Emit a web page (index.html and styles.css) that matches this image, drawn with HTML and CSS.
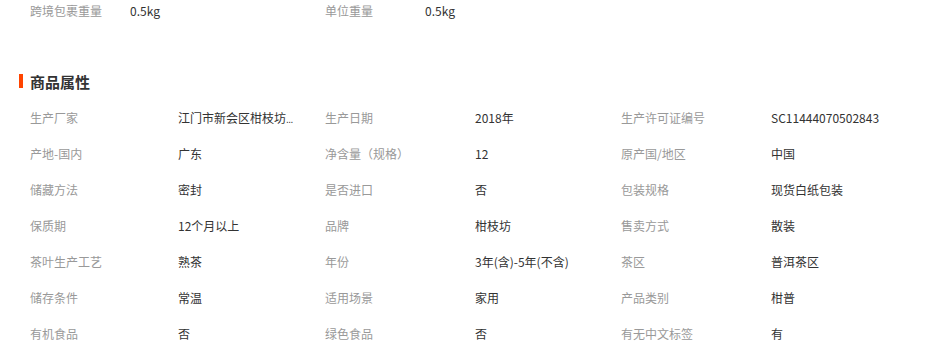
FILE: index.html
```html
<!DOCTYPE html>
<html lang="zh-CN">
<head>
<meta charset="utf-8">
<title>商品属性</title>
<link rel="stylesheet" href="styles.css">
</head>
<body>
<div class="page">
  <div class="top-row">
    <div class="top-item"><span class="top-label">跨境包裹重量</span><span class="value">0.5kg</span></div>
    <div class="top-item"><span class="top-label">单位重量</span><span class="value">0.5kg</span></div>
  </div>

  <h2 class="section-title"><span class="bar"></span>商品属性</h2>

  <div class="attrs">
    <span class="label">生产厂家</span><span class="value" title="江门市新会区柑枝坊茶业有限公司">江门市新会区柑枝坊<span class="dots">...</span></span>
    <span class="label">生产日期</span><span class="value">2018年</span>
    <span class="label">生产许可证编号</span><span class="value">SC11444070502843</span>

    <span class="label">产地-国内</span><span class="value">广东</span>
    <span class="label">净含量（规格）</span><span class="value">12</span>
    <span class="label">原产国/地区</span><span class="value">中国</span>

    <span class="label">储藏方法</span><span class="value">密封</span>
    <span class="label">是否进口</span><span class="value">否</span>
    <span class="label">包装规格</span><span class="value">现货白纸包装</span>

    <span class="label">保质期</span><span class="value">12个月以上</span>
    <span class="label">品牌</span><span class="value">柑枝坊</span>
    <span class="label">售卖方式</span><span class="value">散装</span>

    <span class="label">茶叶生产工艺</span><span class="value">熟茶</span>
    <span class="label">年份</span><span class="value">3年(含)-5年(不含)</span>
    <span class="label">茶区</span><span class="value">普洱茶区</span>

    <span class="label">储存条件</span><span class="value">常温</span>
    <span class="label">适用场景</span><span class="value">家用</span>
    <span class="label">产品类别</span><span class="value">柑普</span>

    <span class="label">有机食品</span><span class="value">否</span>
    <span class="label">绿色食品</span><span class="value">否</span>
    <span class="label">有无中文标签</span><span class="value">有</span>
  </div>
</div>
</body>
</html>
```

FILE: styles.css
```css
* { box-sizing: border-box; }

html, body {
  margin: 0;
  padding: 0;
  background: #fff;
}

body {
  font-family: "Microsoft YaHei", "Noto Sans CJK SC", "Liberation Sans", sans-serif;
  font-size: 12px;
  color: #333;
}

.page {
  width: 928px;
}

.top-row {
  display: grid;
  grid-template-columns: 295px 296px auto;
  padding-left: 30px;
  height: 22px;
  line-height: 22px;
}

.top-item {
  display: flex;
}

.top-label {
  width: 100px;
  color: #999;
  flex: none;
}

.section-title {
  display: flex;
  align-items: center;
  margin: 48px 0 7px 19px;
  height: 22px;
  font-size: 15px;
  font-weight: bold;
  color: #333;
}

.bar {
  width: 4px;
  height: 14px;
  background: #ff4400;
  margin-right: 7px;
}

.attrs {
  display: grid;
  grid-template-columns: 148px 147px 150px 146px 150px auto;
  grid-auto-rows: 36px;
  align-items: center;
  padding-left: 30px;
}

.label {
  color: #999;
  white-space: nowrap;
}

.value {
  color: #333;
  white-space: nowrap;
}

.dots {
  font-family: "Liberation Sans", sans-serif;
  font-size: 10px;
  letter-spacing: -0.5px;
}
```
